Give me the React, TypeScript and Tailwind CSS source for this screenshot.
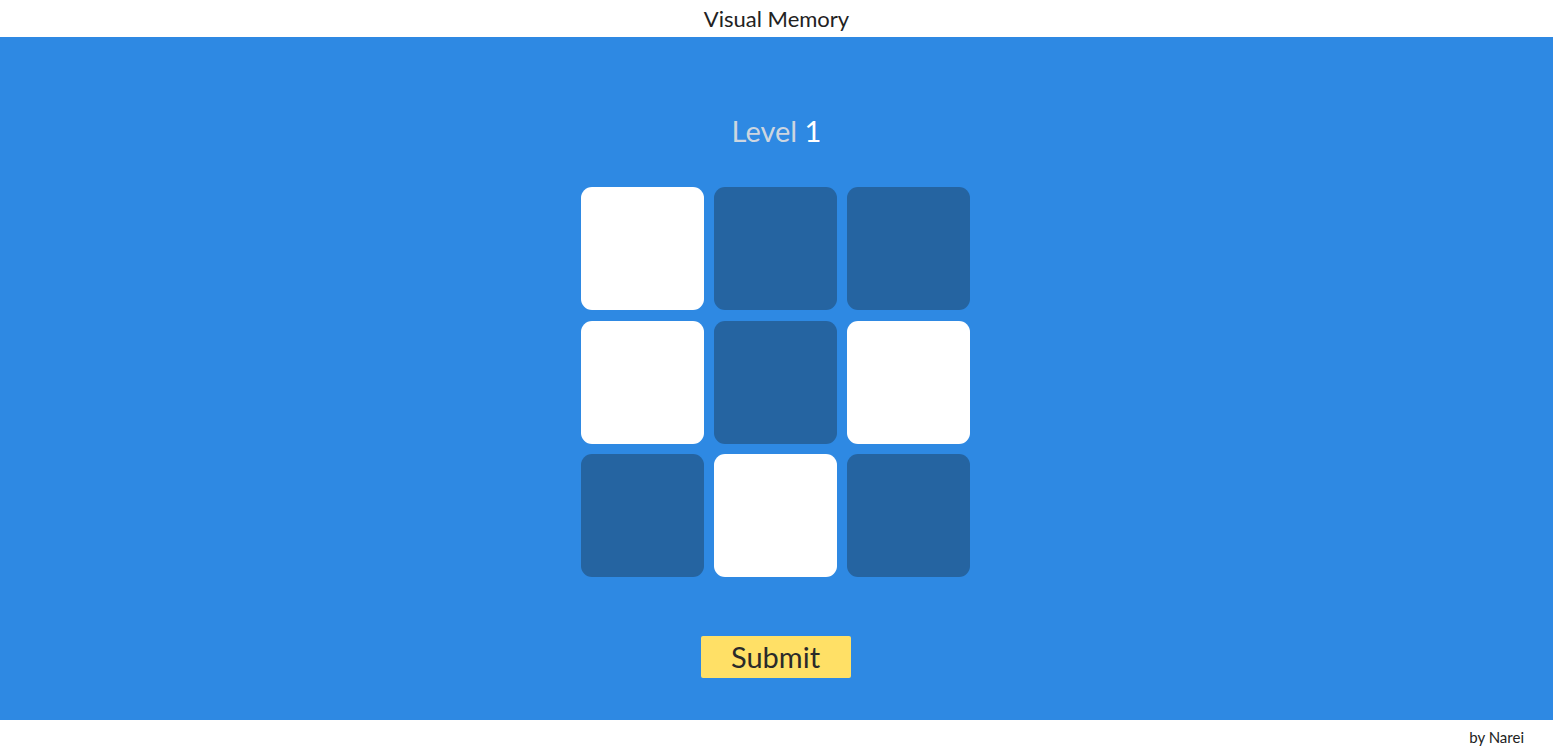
import React from "react";

const tiles = [true, false, false, true, false, true, false, true, false];

export default function App() {
  return (
    <div className="flex h-[755px] w-full flex-col bg-white" style={{ fontFamily: "Lato, 'Noto Sans', sans-serif" }}>
      <header className="flex h-[37px] items-center justify-center text-[22px] text-[#222]">
        Visual Memory
      </header>
      <main className="flex h-[683px] flex-col items-center bg-[#2e89e3]">
        <div className="mt-[74px] h-[40px] text-[29px] leading-[40px] text-[#cdd6e0]">
          Level <span className="text-white">1</span>
        </div>
        <div className="mt-[36px] mr-[2px] grid grid-cols-[123px_123px_123px] gap-x-[10px] gap-y-[10.5px]">
          {tiles.map((w, i) => (
            <div
              key={i}
              className={`h-[123px] w-[123px] rounded-[11px] ${w ? "bg-white" : "bg-[#2564a1]"}`}
            />
          ))}
        </div>
        <button className="mt-[59px] mr-[2px] flex h-[42px] w-[150px] items-center justify-center rounded-[2px] bg-[#ffe066] text-[29px] text-[#2a2a2a]">
          Submit
        </button>
      </main>
      <footer className="flex h-[35px] items-center justify-end pr-[29px] text-[15px] text-[#222]">
        by Narei
      </footer>
    </div>
  );
}
